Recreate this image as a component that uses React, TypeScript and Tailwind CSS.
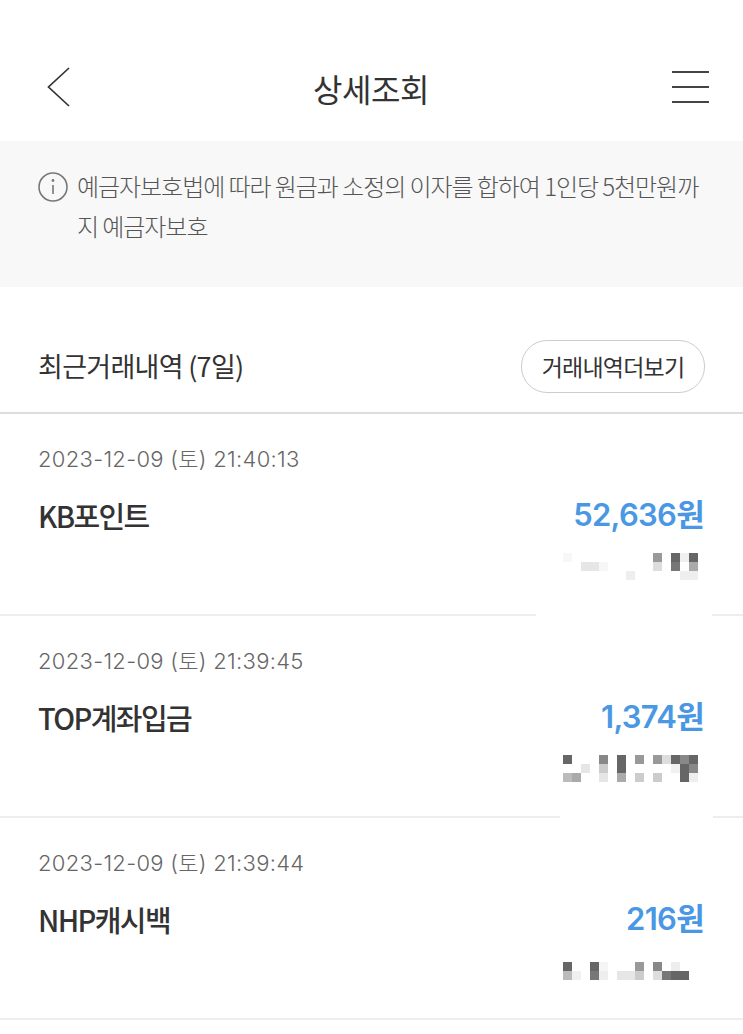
import React from 'react';

type Cell = [number, number, string];

interface Transaction {
  time: string;
  name: string;
  amount: string;
  mosaic: Cell[];
  mosaicClass: string;
  maskClass: string;
}

const transactions: Transaction[] = [
  {
    time: '2023-12-09 (토) 21:40:13',
    name: 'KB포인트',
    amount: '52,636원',
    mosaicClass: 'top-[139px]',
    maskClass: 'left-[536px] w-[176px]',
    mosaic: [
      [0, 0, '#f7f7f7'], [10, 0, '#999999'], [12, 0, '#666666'], [13, 0, '#f0f0f0'], [14, 0, '#666666'],
      [2, 1, '#e6e6e6'], [3, 1, '#e6e6e6'], [4, 1, '#f7f7f7'], [10, 1, '#dddddd'], [12, 1, '#777777'], [14, 1, '#aaaaaa'],
      [7, 2, '#eeeeee'], [13, 2, '#eeeeee'], [14, 2, '#eeeeee'],
    ],
  },
  {
    time: '2023-12-09 (토) 21:39:45',
    name: 'TOP계좌입금',
    amount: '1,374원',
    mosaicClass: 'top-[139px]',
    maskClass: 'left-[560px] w-[153px]',
    mosaic: [
      [0, 0, '#666666'], [4, 0, '#888888'], [6, 0, '#666666'], [8, 0, '#999999'], [10, 0, '#999999'], [11, 0, '#dddddd'], [12, 0, '#666666'], [13, 0, '#888888'], [14, 0, '#666666'],
      [2, 1, '#e6e6e6'], [4, 1, '#cccccc'], [6, 1, '#666666'], [12, 1, '#f0f0f0'], [13, 1, '#666666'], [14, 1, '#888888'],
      [0, 2, '#bbbbbb'], [1, 2, '#aaaaaa'], [4, 2, '#e6e6e6'], [6, 2, '#aaaaaa'], [8, 2, '#cccccc'], [10, 2, '#cccccc'], [13, 2, '#666666'], [14, 2, '#eeeeee'],
    ],
  },
  {
    time: '2023-12-09 (토) 21:39:44',
    name: 'NHP캐시백',
    amount: '216원',
    mosaicClass: 'top-[144px]',
    maskClass: 'hidden',
    mosaic: [
      [0, 0, '#666666'], [3, 0, '#666666'], [4, 0, '#f5f5f5'], [8, 0, '#999999'], [10, 0, '#888888'], [12, 0, '#eeeeee'],
      [0, 1, '#bbbbbb'], [1, 1, '#f0f0f0'], [3, 1, '#777777'], [4, 1, '#eeeeee'], [6, 1, '#e6e6e6'], [7, 1, '#e6e6e6'], [8, 1, '#cccccc'], [10, 1, '#dddddd'], [11, 1, '#777777'], [12, 1, '#666666'], [13, 1, '#666666'],
    ],
  },
];

// blurred-out account number, 9px blocks
const Mosaic = ({ cells }: { cells: Cell[] }) => (
  <svg width="135" height="27" className="block">
    {cells.map(([col, row, fill]) => (
      <rect key={`${col}-${row}`} x={col * 9} y={row * 9} width="9" height="9" fill={fill} />
    ))}
  </svg>
);

export default function App() {
  return (
    <div
      className="min-h-[1034px] w-[743px] overflow-hidden bg-white text-[#333333]"
      style={{ fontFamily: '"Noto Sans CJK KR", "Noto Sans", sans-serif' }}
    >
      <header className="flex h-[141px] items-center justify-between pl-[47px] pr-[34px] pt-[36px]">
        <svg width="23" height="40" viewBox="0 0 23 40" fill="none" stroke="#333333" strokeWidth="1.7" className="mb-[3px]">
          <path d="M22 1 1.5 20 22 39" />
        </svg>
        <h1 className="mb-[2px] text-[32px] font-normal leading-none tracking-[-0.5px]">상세조회</h1>
        <div className="mb-[4px] flex w-[37px] flex-col gap-[13px]">
          <div className="h-[2px] bg-[#444444]" />
          <div className="h-[2px] bg-[#444444]" />
          <div className="h-[2px] bg-[#444444]" />
        </div>
      </header>

      <section className="flex h-[146px] gap-[9px] bg-[#f8f8f8] pl-[38px] pr-[30px] pt-[25px]">
        <svg width="30" height="30" viewBox="0 0 30 30" fill="none" stroke="#777777" strokeWidth="1.6" className="mt-[6px] shrink-0">
          <circle cx="15" cy="15" r="14" />
          <path d="M15 13v9" />
          <circle cx="15" cy="8.5" r="0.6" fill="#777777" />
        </svg>
        <p className="text-[24px] font-light leading-[40px] tracking-[-1.05px] text-[#555555]">
          예금자보호법에 따라 원금과 소정의 이자를 합하여 1인당 5천만원까
          <br />
          지 예금자보호
        </p>
      </section>

      <section className="flex h-[127px] items-center justify-between border-b-2 border-[#dddddd] pl-[38px] pr-[38px] pt-[34px]">
        <h2 className="text-[27px] font-normal tracking-[-0.7px]">최근거래내역 (7일)</h2>
        <button className="h-[53px] w-[184px] rounded-[26px] border border-[#cccccc] bg-white text-[23px] tracking-[-0.8px]">
          거래내역더보기
        </button>
      </section>

      {transactions.map((tx) => (
        <article key={tx.name} className="relative h-[202px] border-b-2 border-[#eeeeee] pl-[38px] pr-[39px] pt-[27px]">
          <div className="text-[22px] font-light leading-[36px] tracking-[0.3px] text-[#666666]" style={{ fontFamily: 'Inter, "Noto Sans CJK KR", sans-serif' }}>
            {tx.time}
          </div>
          <div className="mt-[18px] flex items-center justify-between">
            <span className="text-[29px] font-medium leading-[40px] tracking-[-1.6px]">{tx.name}</span>
            <span className="text-[31px] font-semibold leading-[40px] tracking-[-0.7px] text-[#4a98e4]" style={{ fontFamily: 'Inter, "Noto Sans CJK KR", sans-serif' }}>
              {tx.amount}
            </span>
          </div>
          <div className={`absolute left-[563px] ${tx.mosaicClass}`}>
            <Mosaic cells={tx.mosaic} />
          </div>
          <div className={`absolute bottom-[-2px] h-[2px] bg-white ${tx.maskClass}`} />
        </article>
      ))}
    </div>
  );
}
